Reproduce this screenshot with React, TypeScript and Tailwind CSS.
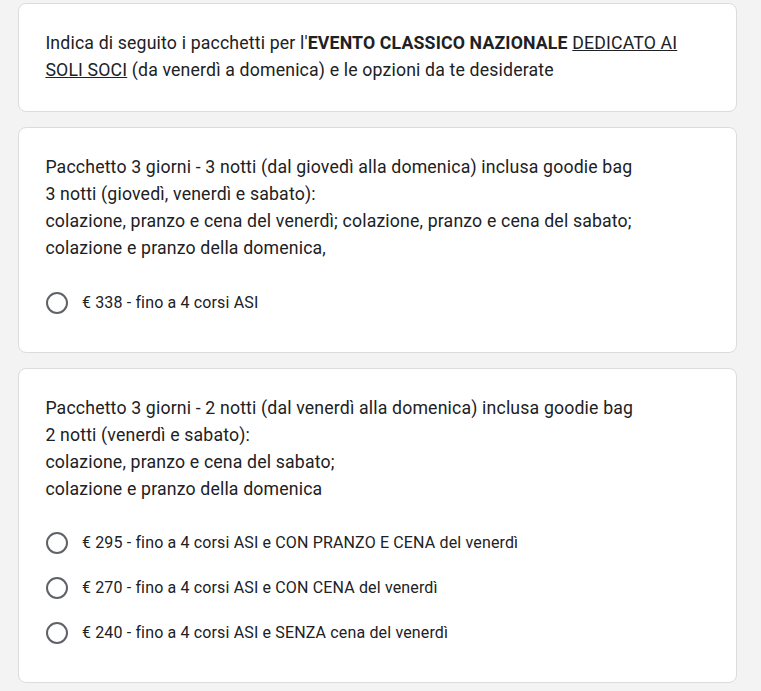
import React from "react";

type Option = { label: string };

function Radio() {
  return (
    <div className="flex h-[22px] w-[22px] shrink-0 items-center justify-center">
      <div className="h-[22px] w-[22px] rounded-full border-[2.2px] border-[#5f6368]" />
    </div>
  );
}

function OptionRow({ label }: Option) {
  return (
    <div className="flex h-[45px] items-center pl-[0.5px]">
      <Radio />
      <span className="ml-[14px] text-[16px] tracking-[0.15px] text-[#202124]">
        {label}
      </span>
    </div>
  );
}

function Card({ children }: { children: React.ReactNode }) {
  return (
    <div className="w-[719px] rounded-[8px] border border-[#dadce0] bg-white px-[26.4px] py-[26.4px]">
      {children}
    </div>
  );
}

export default function App() {
  const first: Option[] = [{ label: "€ 338 - fino a 4 corsi ASI" }];
  const second: Option[] = [
    { label: "€ 295 - fino a 4 corsi ASI e CON PRANZO E CENA del venerdì" },
    { label: "€ 270 - fino a 4 corsi ASI e CON CENA del venerdì" },
    { label: "€ 240 - fino a 4 corsi ASI e SENZA cena del venerdì" },
  ];

  const title = "text-[17.7px] leading-[27px] tracking-[0.16px]";

  return (
    <div
      className="min-h-screen bg-[#f3f3f3] pl-[18px] pt-[3px] pb-4 text-[#202124]"
      style={{ fontFamily: "Roboto, Arial, sans-serif" }}
    >
      <div className="flex flex-col gap-[15px]">
        <Card>
          <p className={title}>
            Indica di seguito i pacchetti per l'
            <b className="font-bold">EVENTO CLASSICO NAZIONALE</b>{" "}
            <u>DEDICATO AI SOLI SOCI</u> (da venerdì a domenica) e le opzioni da te desiderate
          </p>
        </Card>

        <Card>
          <p className={title}>
            Pacchetto 3 giorni - 3 notti (dal giovedì alla domenica) inclusa goodie bag
            <br />
            3 notti (giovedì, venerdì e sabato):
            <br />
            colazione, pranzo e cena del venerdì; colazione, pranzo e cena del sabato;
            <br />
            colazione e pranzo della domenica,
          </p>
          <div className="mt-[18px]">
            {first.map((o) => (
              <OptionRow key={o.label} label={o.label} />
            ))}
          </div>
        </Card>

        <Card>
          <p className={title}>
            Pacchetto 3 giorni - 2 notti (dal venerdì alla domenica) inclusa goodie bag
            <br />
            2 notti (venerdì e sabato):
            <br />
            colazione, pranzo e cena del sabato;
            <br />
            colazione e pranzo della domenica
          </p>
          <div className="mt-[18px]">
            {second.map((o) => (
              <OptionRow key={o.label} label={o.label} />
            ))}
          </div>
        </Card>
      </div>
    </div>
  );
}
